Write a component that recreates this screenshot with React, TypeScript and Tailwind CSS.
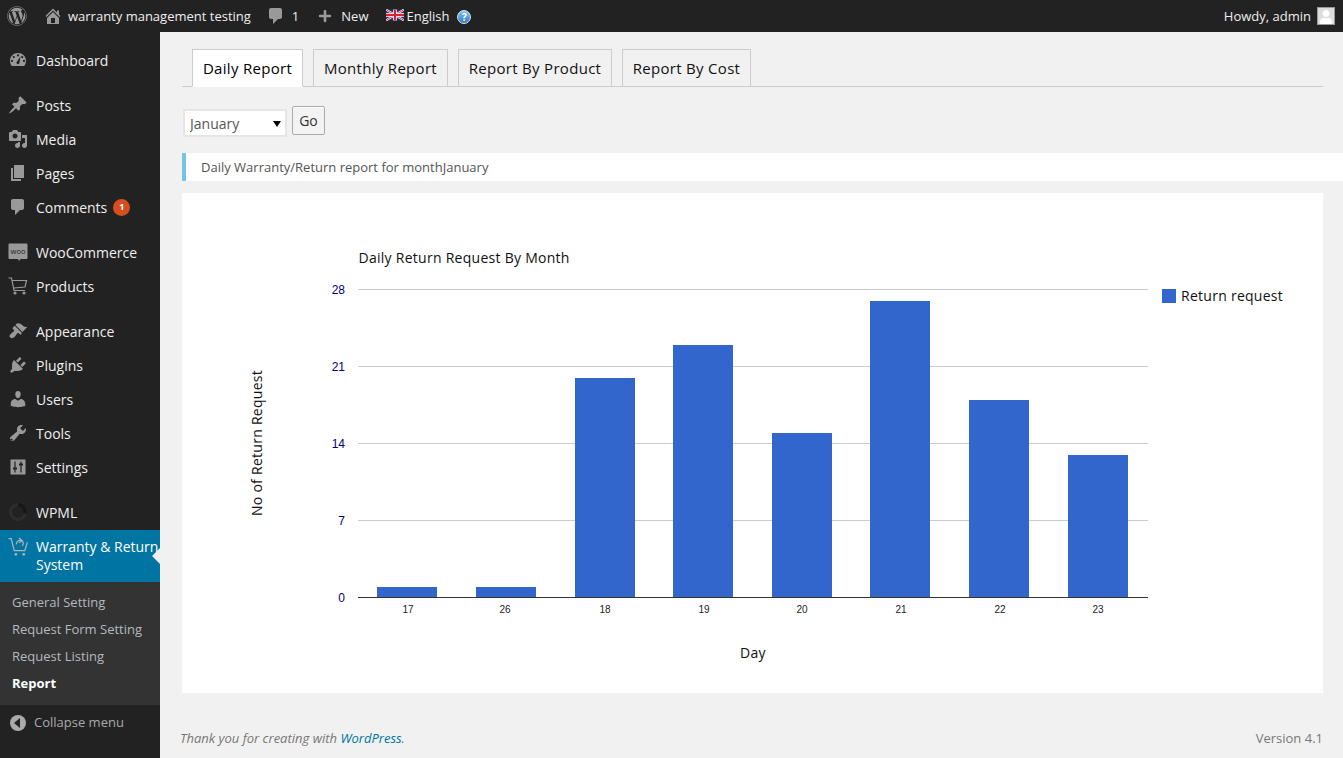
import { FaWordpress, FaUser, FaPlus } from "react-icons/fa"
import type { ReactNode } from "react"

const font = "font-['Open_Sans',sans-serif]"

// dashicons style glyph, 20 unit box
function Glyph({ d, className = "w-5 h-5" }: { d: string; className?: string }) {
  return (
    <svg viewBox="0 0 20 20" className={className} fill="currentColor" fillRule="evenodd">
      <path d={d} />
    </svg>
  )
}

const homeIcon = "M16 8.500l1.530 1.530-1.060 1.060L10 4.620l-6.470 6.470-1.060-1.060L10 2.500l4 4v-2h2v4zm-6-2.460l6 5.990V18H4v-5.970zM12 17v-5H8v5h4z"
const commentIcon = "M5 2h9c1.100 0 2 .9 2 2v7c0 1.100-.9 2-2 2h-2l-5 5v-5H5c-1.100 0-2-.9-2-2V4c0-1.100.9-2 2-2z"
const dashboardIcon = "M3.760 16h12.480c1.100-1.430 1.760-3.210 1.760-5.140C18 6.200 14.420 3 10 3s-8 3.200-8 7.860c0 1.930.66 3.710 1.760 5.140zM10 4.300a1.100 1.100 0 1 1 0 2.200 1.100 1.100 0 0 1 0-2.200zM5.800 6a1.100 1.100 0 1 1 0 2.200 1.100 1.100 0 0 1 0-2.200zm8.400 0a1.100 1.100 0 1 1 0 2.200 1.100 1.100 0 0 1 0-2.200zM4 9.800a1.100 1.100 0 1 1 0 2.200 1.100 1.100 0 0 1 0-2.200zm12 0a1.100 1.100 0 1 1 0 2.200 1.100 1.100 0 0 1 0-2.200zM9 11.500L12.500 6.500l-1 5.800c.2.900-.5 2-1.600 2-1.200 0-2-1.700-.9-2.800z"
const postIcon = "M10.440 3.020l1.820-1.820 6.360 6.350-1.830 1.820c-1.050-.68-2.480-.57-3.410.36l-.75.75c-.92.93-1.040 2.350-.35 3.410l-1.830 1.820-2.410-2.410-2.800 2.790c-.42.42-3.380 2.710-3.800 2.290s1.860-3.390 2.280-3.810l2.790-2.790L4.100 9.360l1.830-1.820c1.050.69 2.480.57 3.400-.36l.75-.75c.93-.92 1.050-2.350.36-3.410z"
const mediaIcon = "M13 11V4c0-.55-.45-1-1-1h-1.670L9 1H5L3.670 3H2c-.55 0-1 .45-1 1v7c0 .55.45 1 1 1h10c.55 0 1-.45 1-1zM7 4.500c1.380 0 2.500 1.120 2.500 2.500S8.380 9.500 7 9.500 4.500 8.380 4.500 7 5.620 4.500 7 4.500zM14 6h5v10.500c0 1.380-1.120 2.500-2.500 2.500S14 17.880 14 16.500s1.120-2.500 2.500-2.500c.17 0 .34.020.5.050V9h-3V6zm-4 8.050V13h2v3.500c0 1.380-1.120 2.500-2.500 2.500S7 17.880 7 16.500 8.120 14 9.500 14c.17 0 .34.020.5.050z"
const pageIcon = "M6 15V2h10v13H6zm-1 1h8v2H3V5h2v11z"
const appearanceIcon = "M14.480 11.060L7.410 3.990l1.500-1.500c.5-.56 2.300-.47 3.510.32 1.210.8 1.430 1.280 2.910 2.100 1.180.64 2.450 1.260 4.230.91zm-.71.710L6.700 4.700 4.930 6.470c-.39.39-.39 1.020 0 1.410l1.060 1.060c.39.390.39 1.030 0 1.420-.6.600-1.430 1.110-2.210 1.690-.35.260-.700.530-1.010.840C1.430 13.710.960 15.200 2.260 16.500s2.800.830 4.610-.970c.31-.310.580-.660.840-1.010.590-.790 1.090-1.620 1.690-2.220.39-.390 1.030-.390 1.420 0l1.060 1.060c.39.390 1.020.390 1.410 0z"
const pluginIcon = "M13.110 4.360L9.870 7.600 8 5.730l3.240-3.240c.35-.34 1.050-.2 1.560.32.520.510.660 1.210.310 1.550zm-8 1.770l.91-1.120 9.010 9.010-1.190.84c-.710.710-2.630 1.160-3.820 1.160H6.140L4.900 17.260c-.59.590-1.540.59-2.120 0-.59-.58-.59-1.530 0-2.120l1.240-1.240v-3.880c0-1.130.4-3.150 1.090-3.890zm7.260 3.970l3.240-3.240c.34-.35 1.040-.21 1.550.31.520.510.660 1.210.310 1.550l-3.240 3.250z"
const usersIcon = "M10 9.250c-2.270 0-2.730-3.440-2.730-3.440C7 4.020 7.820 2 9.970 2c2.160 0 2.980 2.020 2.710 3.810 0 0-.41 3.440-2.680 3.440zm0 2.570L12.720 10c2.390 0 4.520 2.330 4.520 4.530v2.490s-3.650 1.130-7.240 1.130c-3.650 0-7.240-1.130-7.240-1.130v-2.490c0-2.250 1.940-4.480 4.470-4.480z"
const toolsIcon = "M16.680 9.770c-1.340 1.340-3.300 1.670-4.950.99l-5.410 6.520c-.99.990-2.590.990-3.570 0-.99-.98-.99-2.580 0-3.570l6.520-5.420c-.68-1.650-.35-3.610.99-4.950 1.280-1.280 3.120-1.620 4.720-1.060l-2.890 2.890 2.820 2.820 2.860-2.870c.53 1.580.18 3.390-1.090 4.670zM4.360 15.990c-.46-.46-1.200-.46-1.660 0-.46.460-.46 1.200 0 1.660.46.460 1.200.460 1.660 0 .46-.460.46-1.200 0-1.660z"

function SettingsIcon() {
  return (
    <svg viewBox="0 0 20 20" className="w-5 h-5">
      <path fill="currentColor" d="M2.500 2.500h15v15h-15z" />
      <path stroke="#222" strokeWidth="1.200" d="M7 4.500v11M13 4.500v11" />
      <path stroke="#222" strokeWidth="2" d="M5 11.500h4M11 7.500h4" />
    </svg>
  )
}

function WooIcon() {
  return (
    <svg viewBox="0 0 20 20" className="w-5 h-5">
      <path fill="currentColor" d="M1.500 1.500h17c.5 0 1 .5 1 1v13.500c0 .5-.5 1-1 1H12.500l-1.500 2-1-2H1.500c-.5 0-1-.5-1-1V2.500c0-.5.5-1 1-1z" />
      <text x="10" y="11.500" textAnchor="middle" fontSize="7.500" fill="#222" fontFamily="Open Sans, sans-serif">woo</text>
    </svg>
  )
}

function CartIcon() {
  return (
    <svg viewBox="0 0 20 20" className="w-5 h-5" fill="none" stroke="currentColor" strokeWidth="1.200">
      <path d="M0.500 2h3l2.500 12.500h11M4 4.500h14.500l-1.500 6.500-11 1" />
      <circle cx="7" cy="17" r="1" fill="currentColor" />
      <circle cx="16" cy="17" r="1" fill="currentColor" />
    </svg>
  )
}

function WpmlIcon() {
  return (
    <svg viewBox="0 0 20 20" className="w-5 h-5" fill="none">
      <circle cx="10" cy="10" r="7.500" stroke="#2e2e2e" strokeWidth="3" />
      <path d="M10 2.500a7.500 7.500 0 0 1 7 9" stroke="#161616" strokeWidth="3" />
    </svg>
  )
}

function ReturnCartIcon() {
  return (
    <svg viewBox="0 0 20 20" className="w-[21px] h-[21px]" fill="none" stroke="currentColor" strokeWidth="1.200">
      <path d="M0.500 1.500h2.500l3 11.500h10l2.500-8" />
      <path d="M8 7a3.500 3.500 0 0 1 5-3.500c2 1 2 3.500 .5 5" />
      <path d="M10.500 1l2.800 2.500-2.800 2" />
      <circle cx="7.500" cy="16.500" r="1.300" fill="currentColor" stroke="none" />
      <circle cx="15" cy="16.500" r="1.300" fill="currentColor" stroke="none" />
    </svg>
  )
}

function UkFlag() {
  return (
    <svg viewBox="0 0 60 36" className="w-[18px] h-3">
      <path fill="#26307f" d="M0 0h60v36H0z" />
      <path stroke="#fff" strokeWidth="7" d="M0 0l60 36M60 0L0 36" />
      <path stroke="#d8232a" strokeWidth="3" d="M0 0l60 36M60 0L0 36" />
      <path stroke="#fff" strokeWidth="12" d="M30 0v36M0 18h60" />
      <path stroke="#d8232a" strokeWidth="7" d="M30 0v36M0 18h60" />
    </svg>
  )
}

function MenuItem({ icon, label, badge }: { icon: ReactNode; label: string; badge?: string }) {
  return (
    <div className="h-[34px] pb-[2px] flex items-center text-[#eee] text-[14px]">
      <div className="w-9 flex justify-center items-center pr-px text-[#999]">{icon}</div>
      <span>{label}</span>
      {badge && (
        <span className="ml-[6px] w-[17px] h-[17px] rounded-full bg-[#d54e21] text-white text-[9px] font-bold flex items-center justify-center">
          {badge}
        </span>
      )}
    </div>
  )
}

const bars = [
  { label: "17", x: 195, labelX: 226, value: 1 },
  { label: "26", x: 294, labelX: 323, value: 1 },
  { label: "18", x: 393, labelX: 423, value: 20 },
  { label: "19", x: 491, labelX: 522, value: 23 },
  { label: "20", x: 590, labelX: 620, value: 15 },
  { label: "21", x: 688, labelX: 719, value: 27 },
  { label: "22", x: 787, labelX: 818, value: 18 },
  { label: "23", x: 886, labelX: 916, value: 13 },
]

const ticks = [
  { label: "28", y: 96.5 },
  { label: "21", y: 173.5 },
  { label: "14", y: 250.5 },
  { label: "7", y: 327.5 },
]

function Chart() {
  return (
    <svg width="1141" height="500" viewBox="0 0 1141 500" className="block">
      <text x="176.500" y="70" fontFamily="Open Sans, sans-serif" fontSize="14" fontWeight="500" letterSpacing="0.27" fill="#111">Daily Return Request By Month</text>
      {ticks.map((t) => (
        <g key={t.label}>
          <line x1="176" x2="966" y1={t.y} y2={t.y} stroke="#ccc" />
          <text x="163" y={t.y + 4} textAnchor="end" fontFamily="Liberation Sans, sans-serif" fontSize="12" fill="#000080">{t.label}</text>
        </g>
      ))}
      <text x="163" y="408.500" textAnchor="end" fontFamily="Liberation Sans, sans-serif" fontSize="12" fill="#000080">0</text>
      {bars.map((b) => (
        <g key={b.label}>
          <rect x={b.x} y={405 - b.value * 11} width="60" height={b.value * 11} fill="#3366cc" />
          <text x={b.labelX} y="420" textAnchor="middle" fontFamily="Liberation Sans, sans-serif" fontSize="10" fill="#222">{b.label}</text>
        </g>
      ))}
      <line x1="176" x2="966" y1="404.500" y2="404.500" stroke="#333" />
      <rect x="980" y="96" width="14" height="14" fill="#3366cc" />
      <text x="999" y="108" fontFamily="Open Sans, sans-serif" fontSize="14" fontWeight="500" letterSpacing="0.27" fill="#111">Return request</text>
      <text x="571" y="465" textAnchor="middle" fontFamily="Open Sans, sans-serif" fontSize="14" fontWeight="500" letterSpacing="0.27" fill="#111">Day</text>
      <text transform="translate(80 250) rotate(-90)" textAnchor="middle" fontFamily="Open Sans, sans-serif" fontSize="14" fontWeight="500" letterSpacing="0.27" fill="#111">No of Return Request</text>
    </svg>
  )
}

export default function App() {
  return (
    <div className={`h-screen flex flex-col overflow-hidden bg-[#f1f1f1] ${font}`}>
      {/* Admin bar */}
      <div className="h-8 shrink-0 bg-[#222] flex items-center justify-between text-[13px] text-[#eee]">
        <div className="flex items-center">
          <FaWordpress className="ml-[7px] w-5 h-5 text-[#999]" />
          <div className="ml-[16px] text-[#999]"><Glyph d={homeIcon} className="w-5 h-5" /></div>
          <span className="ml-[5px] pt-[2px]">warranty management testing</span>
          <div className="ml-[15px] text-[#999]"><Glyph d={commentIcon} /></div>
          <span className="ml-[6px] pt-[2px]">1</span>
          <FaPlus className="ml-[19px] w-[14px] h-[14px] text-[#999]" />
          <span className="ml-[9px] pt-[2px]">New</span>
          <div className="ml-[18px] mb-[2px]"><UkFlag /></div>
          <span className="ml-[2px] pt-[2px]">English</span>
          <span className="ml-[8px] mt-[2px] w-[14px] h-[14px] rounded-full bg-gradient-to-b from-[#8fc3ee] to-[#2f78bd] border border-[#d5e7f6] text-white text-[10px] font-bold flex items-center justify-center">?</span>
        </div>
        <div className="flex items-center pr-2">
          <span className="pt-[2px]">Howdy, admin</span>
          <div className="ml-[6px] w-[18px] h-[18px] bg-[#ddd] border border-[#999] flex items-end justify-center overflow-hidden">
            <FaUser className="w-[14px] h-[14px] text-white" />
          </div>
        </div>
      </div>

      <div className="flex flex-1 min-h-0">
        {/* Sidebar */}
        <div className="w-40 shrink-0 bg-[#222] pt-3 overflow-hidden">
          <MenuItem icon={<Glyph d={dashboardIcon} />} label="Dashboard" />
          <div className="h-[11px]" />
          <MenuItem icon={<Glyph d={postIcon} />} label="Posts" />
          <MenuItem icon={<Glyph d={mediaIcon} />} label="Media" />
          <MenuItem icon={<Glyph d={pageIcon} />} label="Pages" />
          <MenuItem icon={<Glyph d={commentIcon} />} label="Comments" badge="1" />
          <div className="h-[11px]" />
          <MenuItem icon={<WooIcon />} label="WooCommerce" />
          <MenuItem icon={<CartIcon />} label="Products" />
          <div className="h-[11px]" />
          <MenuItem icon={<Glyph d={appearanceIcon} />} label="Appearance" />
          <MenuItem icon={<Glyph d={pluginIcon} />} label="Plugins" />
          <MenuItem icon={<Glyph d={usersIcon} />} label="Users" />
          <MenuItem icon={<Glyph d={toolsIcon} />} label="Tools" />
          <MenuItem icon={<SettingsIcon />} label="Settings" />
          <div className="h-[11px]" />
          <MenuItem icon={<WpmlIcon />} label="WPML" />

          <div className="relative h-[52px] bg-[#0074a2] text-white text-[14px] leading-[18px] flex items-center whitespace-nowrap">
            <div className="w-9 shrink-0 self-start pt-[7px] flex justify-center text-[#aab4b9]"><ReturnCartIcon /></div>
            <div>Warranty &amp; Return<br />System</div>
            <div className="absolute right-0 top-[18px] border-y-8 border-r-8 border-y-transparent border-r-[#f1f1f1]" />
          </div>
          <div className="h-[123px] bg-[#333] pl-3 py-[7.500px] text-[13px] text-[#b4b9be]">
            <div className="h-[27px] flex items-center">General Setting</div>
            <div className="h-[27px] flex items-center">Request Form Setting</div>
            <div className="h-[27px] flex items-center">Request Listing</div>
            <div className="h-[27px] flex items-center text-white font-bold">Report</div>
          </div>
          <div className="h-[36px] flex items-center text-[13px] text-[#aaa]">
            <div className="ml-[10px] w-4 h-4 rounded-full bg-[#aaa] flex items-center justify-center">
              <div className="mr-[2px] border-y-[5px] border-r-[6px] border-y-transparent border-r-[#222]" />
            </div>
            <span className="ml-2">Collapse menu</span>
          </div>
        </div>

        {/* Main */}
        <div className="flex-1 min-w-0 flex flex-col pl-[22px]">
          <div className="mt-[17px] mr-[20px] h-[38px] pl-[10px] flex items-end border-b border-[#ccc] text-[15px] font-medium tracking-[0.3px] text-[#111]">
            <div className="w-[111px] h-[38px] -mb-px flex items-center justify-center bg-white border border-[#ccc] border-b-white text-black">Daily Report</div>
            <div className="w-[135px] ml-[10px] h-[37px] flex items-center justify-center bg-[#f1f1f1] border border-b-0 border-[#ccc]">Monthly Report</div>
            <div className="w-[154px] ml-[10px] h-[37px] flex items-center justify-center bg-[#f1f1f1] border border-b-0 border-[#ccc]">Report By Product</div>
            <div className="w-[129px] ml-[10px] h-[37px] flex items-center justify-center bg-[#f1f1f1] border border-b-0 border-[#ccc]">Report By Cost</div>
          </div>

          <div className="mt-[19px] pl-px flex items-start gap-[5px]">
            <div className="relative mt-[3px] w-[104px] h-[28px]">
              <select className="appearance-none w-full h-full bg-white border-2 border-[#e5e5e5] text-[14px] text-[#555] pl-[5px] outline-none">
                <option>January</option>
              </select>
              <div className="absolute right-[6px] top-[12px] border-x-[4px] border-t-[6px] border-x-transparent border-t-black" />
            </div>
            <button className="w-[33px] h-[29px] rounded-[2px] bg-[#f3f3f3] border border-[#aaa] text-[14px] text-[#333] shadow-[inset_0_1px_0_#fff]">Go</button>
          </div>

          <div className="mt-[16px] h-[28px] pl-[15px] pt-[2px] flex items-center bg-white border-l-4 border-[#72c6e4] text-[13px] text-[#555]">
            Daily Warranty/Return report for monthJanuary
          </div>

          <div className="mt-3 mr-[20px] h-[500px] bg-white">
            <Chart />
          </div>

          <div className="mt-[36px] mr-[20px] -ml-[2px] flex justify-between text-[13px] leading-[18px] text-[#777]">
            <span className="italic">Thank you for creating with <span className="text-[#0074a2]">WordPress</span>.</span>
            <span>Version 4.1</span>
          </div>
        </div>
      </div>
    </div>
  )
}
